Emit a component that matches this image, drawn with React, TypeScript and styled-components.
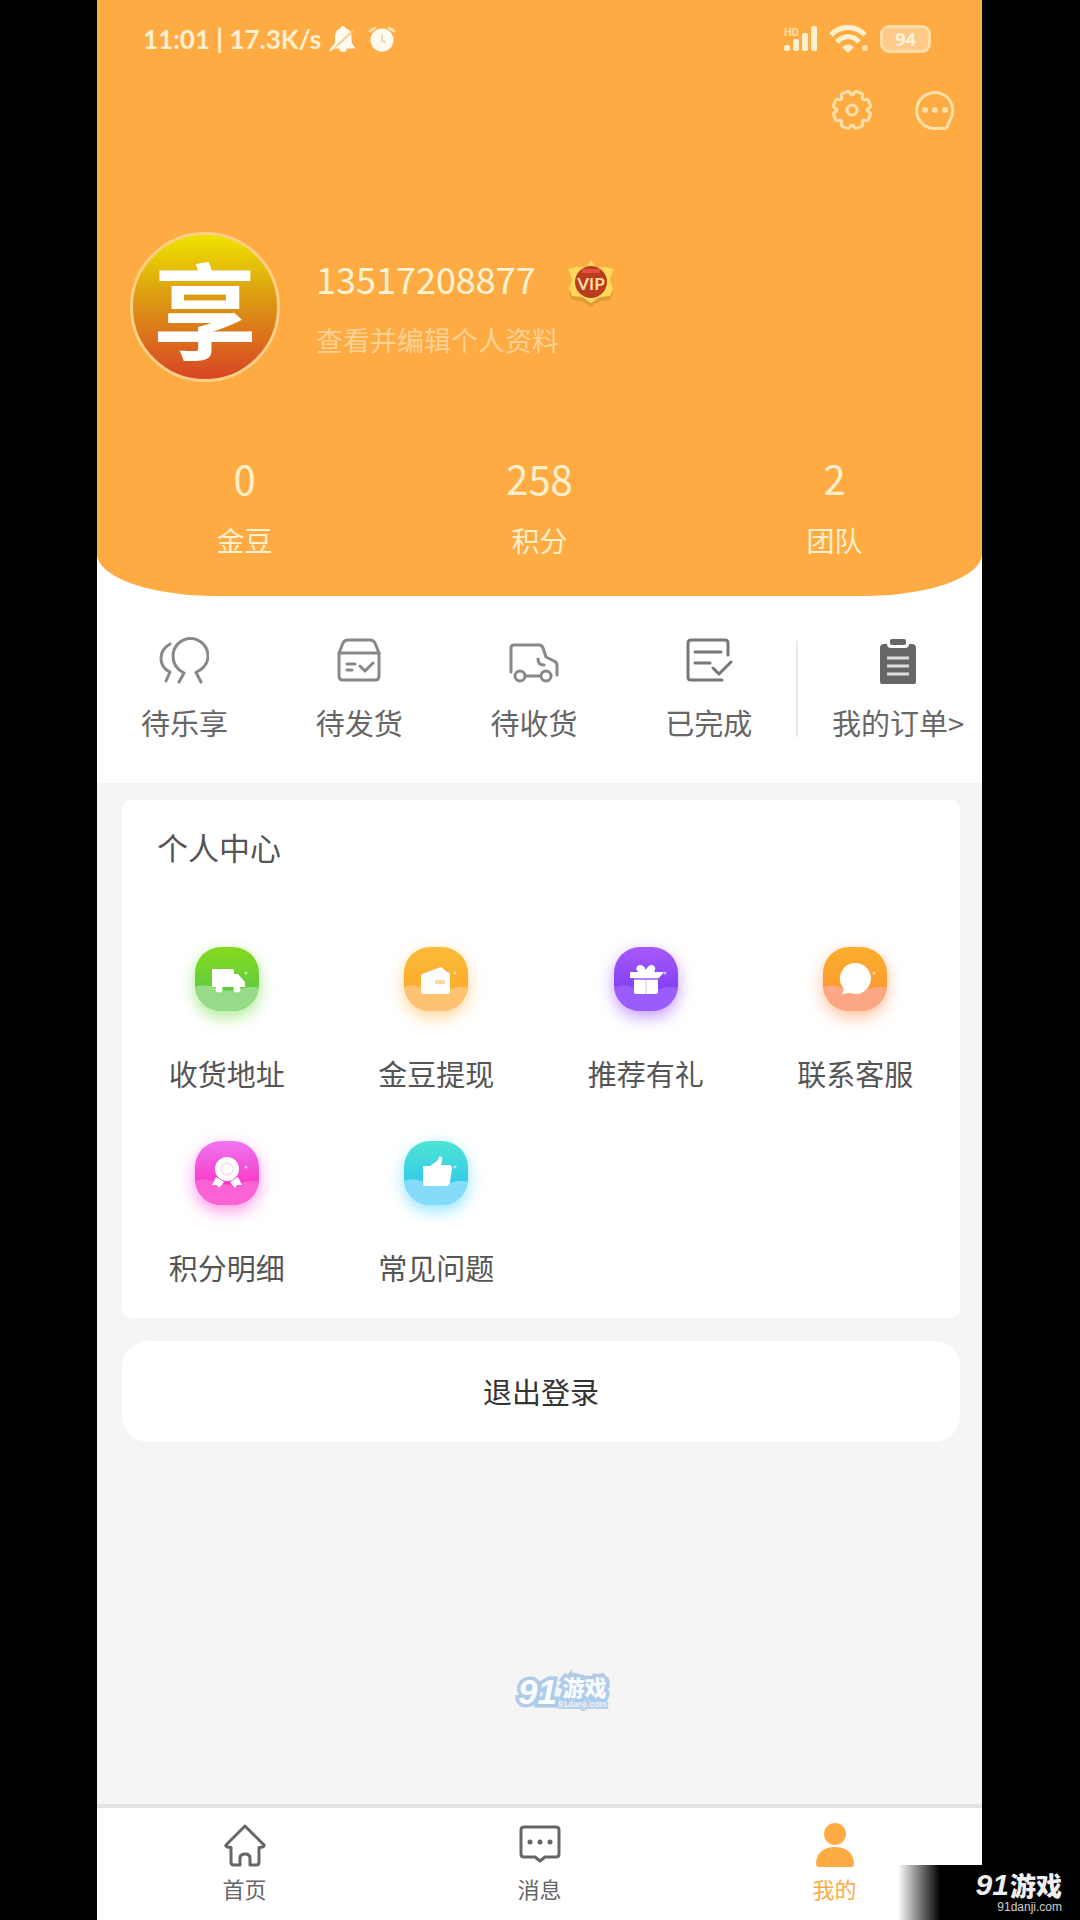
import React from "react";
import styled, { createGlobalStyle } from "styled-components";

const GlobalStyle = createGlobalStyle`
  * { box-sizing: border-box; }
  body {
    margin: 0;
    background: #000;
    font-family: "Noto Sans CJK SC", sans-serif;
  }
  button {
    border: 0;
    padding: 0;
    background: none;
    font: inherit;
    color: inherit;
    cursor: pointer;
  }
  a { color: inherit; text-decoration: none; }
  svg { display: block; flex: none; }
`;

const Page = styled.div`
  position: relative;
  display: flex;
  min-height: 100vh;
  padding: 0 98px 0 97px;
`;

const Screen = styled.div`
  flex: 1;
  min-width: 0;
  display: flex;
  flex-direction: column;
  background: #f5f5f5;
`;

const HeaderWrap = styled.div`
  background: #fff;
`;

const Header = styled.header`
  padding: 20px 0 38px;
  background: #ffab44;
  border-radius: 0 0 120px 120px / 0 0 42px 42px;
`;

const StatusBar = styled.div`
  display: flex;
  align-items: center;
  justify-content: space-between;
  height: 38px;
  padding: 0 51px 0 46px;
`;

const StatusGroup = styled.div<{ $gap: number }>`
  display: flex;
  align-items: center;
  gap: ${(p) => p.$gap}px;
  color: #fff0cf;
  font: 700 26px/38px Lato, sans-serif;
`;

const StatusIcons = styled.span`
  display: flex;
  align-items: center;
  gap: 11px;
`;

const Battery = styled.span`
  width: 51px;
  height: 28px;
  border: 3px solid #ffdda6;
  border-radius: 9px;
  background: #ffc98a;
  color: #fff3dc;
  font: 700 18px/22px "Open Sans", sans-serif;
  text-align: center;
`;

const Tools = styled.div`
  display: flex;
  justify-content: flex-end;
  gap: 43px;
  margin-top: 32px;
  padding-right: 27px;
  color: #ffe0a8;
`;

const Profile = styled.div`
  display: flex;
  align-items: center;
  gap: 36px;
  margin-top: 102px;
  padding-left: 33px;
`;

const Avatar = styled.div`
  width: 150px;
  height: 150px;
  border: 3px solid #ffcf85;
  border-radius: 50%;
  background: linear-gradient(#f0e000 2%, #dca011 40%, #dc7a1a 65%, #d84824 98%);
  color: #fff;
  font-size: 104px;
  font-weight: 700;
  line-height: 144px;
  text-align: center;
`;

const ProfileInfo = styled.div`
  display: flex;
  flex-direction: column;
  gap: 20px;
  padding-bottom: 3px;
`;

const NameRow = styled.div`
  display: flex;
  align-items: center;
  gap: 32px;
  height: 48px;
  color: #fff3d4;
  font-size: 36px;
  line-height: 48px;
`;

const BadgeBox = styled.span`
  padding-top: 12px;
`;

const EditLink = styled.a`
  && { color: #ffd294; }
  font-size: 27px;
  line-height: 36px;
`;

const Stats = styled.div`
  display: grid;
  grid-template-columns: repeat(3, 1fr);
  margin-top: 72px;
`;

const Stat = styled.button`
  && { color: #fff0cc; }
  display: flex;
  flex-direction: column;
  align-items: center;
  gap: 20px;
`;

const StatValue = styled.span`
  font-size: 40px;
  line-height: 48px;
`;

const StatLabel = styled.span`
  font-size: 28px;
  line-height: 36px;
`;

const Orders = styled.nav`
  display: grid;
  grid-template-columns: repeat(4, 175fr) 2px 184fr;
  align-items: center;
  padding: 40px 0 41px;
  background: #fff;
`;

const OrderItem = styled.a<{ $last?: boolean }>`
  display: flex;
  flex-direction: column;
  align-items: center;
  gap: 18px;
  min-width: 0;
  padding-left: ${(p) => (p.$last ? "16px" : "0")};
  && { color: #666; }
  font-size: 29px;
  line-height: 40px;
  white-space: nowrap;
`;

const Divider = styled.span`
  height: 96px;
  background: #eaeaea;
`;

const Main = styled.main`
  position: relative;
  flex: 1;
  padding: 17px 22px 0 25px;
`;

const Card = styled.section`
  padding: 25px 0 31px;
  border-radius: 9px;
  background: #fff;
`;

const CardTitle = styled.h2`
  margin: 0;
  padding-left: 35px;
  color: #555;
  font-size: 31px;
  font-weight: 400;
  line-height: 44px;
`;

const ServiceGrid = styled.div`
  display: grid;
  grid-template-columns: repeat(4, 1fr);
  row-gap: 48px;
  margin-top: 78px;
`;

const Service = styled.a`
  display: flex;
  flex-direction: column;
  align-items: center;
  gap: 42px;
  && { color: #555; }
  font-size: 29px;
  line-height: 40px;
`;

const Tile = styled.span<{ $top: string; $mid: string; $glow: string }>`
  width: 64px;
  height: 64px;
  border-radius: 26px;
  overflow: hidden;
  background: linear-gradient(${(p) => p.$top}, ${(p) => p.$mid} 65%);
  box-shadow: 0 6px 16px ${(p) => p.$glow};
`;

const Logout = styled.button`
  && {
    display: block;
    width: 100%;
    margin-top: 23px;
    padding: 30px 0;
    border-radius: 26px;
    background: #fff;
    color: #333;
    font-size: 29px;
    line-height: 41px;
  }
`;

const TabBar = styled.nav`
  display: grid;
  grid-template-columns: repeat(3, 1fr);
  padding: 15px 0 17px;
  border-top: 4px solid #e3e3e3;
  background: #fff;
`;

const Tab = styled.a<{ $active?: boolean }>`
  display: flex;
  flex-direction: column;
  align-items: center;
  gap: 6px;
  && { color: ${(p) => (p.$active ? "#ffab44" : "#666")}; }
  font-size: 22px;
  line-height: 30px;
`;

const CenterMark = styled.div`
  position: absolute;
  left: 421px;
  bottom: 94px;
  display: flex;
  gap: 1px;
  color: #fafcff;
  -webkit-text-stroke: 7px #aecbea;
  paint-order: stroke;
`;

const CornerMark = styled.div`
  position: absolute;
  right: 0;
  bottom: 0;
  width: 182px;
  height: 55px;
  padding: 6px 18px 0 0;
  color: #eee;
  background: linear-gradient(to right, #fff, #000 42px);
`;

const MarkRow = styled.span`
  display: flex;
  justify-content: flex-end;
  gap: 1px;
`;

const MarkNumber = styled.span<{ $size: number; $line: number }>`
  font: italic 700 ${(p) => p.$size}px/${(p) => p.$line}px "Liberation Sans", sans-serif;
`;

const MarkText = styled.span`
  display: flex;
  flex-direction: column;
  align-items: flex-end;
`;

const MarkName = styled.span<{ $size: number; $line: number }>`
  font-size: ${(p) => p.$size}px;
  font-weight: 900;
  line-height: ${(p) => p.$line}px;
`;

const MarkDomain = styled.span<{ $size: number; $line: number; $stroke: number }>`
  font: ${(p) => p.$size}px/${(p) => p.$line}px "Liberation Sans", sans-serif;
  -webkit-text-stroke-width: ${(p) => p.$stroke}px;
  opacity: 0.85;
`;

const line = (w: number) => ({
  fill: "none",
  stroke: "currentColor",
  strokeWidth: w,
  strokeLinecap: "round" as const,
  strokeLinejoin: "round" as const,
});

const BellOff = () => (
  <svg width="28" height="30" viewBox="0 0 28 30">
    <path d="M14 2c1.500 0 2.500 1 2.500 2.300 4 1.200 6 4 6 8.200v6l4 6H2l4-6v-6c0-4.200 2-7 5.500-8.200C11.500 3 12.500 2 14 2z" fill="#fffbee" />
    <path d="M10 24h8c-.5 3-2 4-4 4s-3.500-1-4-4z" fill="#fffbee" />
    <path d="M4 25L24 7" stroke="#f0cf98" strokeWidth="2" />
    <path d="M1 27L7 20" stroke="#fffbee" strokeWidth="2" />
  </svg>
);

const Alarm = () => (
  <svg width="28" height="28" viewBox="0 0 28 28">
    <circle cx="14" cy="15" r="11.500" fill="#fffbee" />
    <path d="M2 6l5-3M26 6l-5-3" stroke="#ffdda6" strokeWidth="3" strokeLinecap="round" />
    <path d="M14 10v6l4 1" fill="none" stroke="#e8d9b4" strokeWidth="2" />
  </svg>
);

const Signal = () => (
  <svg width="36" height="28" viewBox="0 0 36 28" fill="#fff0cf">
    <rect x="2" y="20" width="6" height="6" rx="2" />
    <rect x="11" y="14" width="6" height="12" rx="2" />
    <rect x="20" y="8" width="6" height="18" rx="2" />
    <rect x="29" y="1" width="6" height="25" rx="2" />
    <text x="2" y="11" fontFamily="Roboto, sans-serif" fontSize="11" fill="#ffdda6">HD</text>
  </svg>
);

const Wifi = () => (
  <svg width="40" height="30" viewBox="0 0 40 30">
    <path d="M2 11c9-10 25-10 34 0" fill="none" stroke="#fff0cf" strokeWidth="5" />
    <path d="M8 18c6-7 16-7 22 0" fill="none" stroke="#fff0cf" strokeWidth="5" />
    <path d="M13 23c4-3.500 8-3.500 12 0l-6 6z" fill="#fff0cf" />
    <circle cx="36" cy="24" r="3" fill="#ffdda6" />
  </svg>
);

const gearPoint = (radius: number, degrees: number) => {
  const a = (degrees * Math.PI) / 180;
  return `${(20 + radius * Math.cos(a)).toFixed(1)} ${(20 + radius * Math.sin(a)).toFixed(1)}`;
};

const gearPath =
  Array.from({ length: 8 }, (_, i) => {
    const mid = i * 45;
    return `${i ? "L" : "M"}${gearPoint(19, mid - 14)}Q${gearPoint(19, mid - 8)} ${gearPoint(16, mid - 5)}Q${gearPoint(14.5, mid)} ${gearPoint(16, mid + 5)}Q${gearPoint(19, mid + 8)} ${gearPoint(19, mid + 14)}`;
  }).join("") + "Z";

const Gear = () => (
  <svg width="40" height="40" viewBox="0 0 40 40" {...line(3)}>
    <path d={gearPath} />
    <circle cx="20" cy="20" r="5" />
  </svg>
);

const ChatRound = () => (
  <svg width="40" height="40" viewBox="0 0 40 40" {...line(3)}>
    <path d="M35 30A18 18 0 1 0 20 38.500h10q2 0 3-4z" />
    <g fill="currentColor" stroke="none">
      <circle cx="10" cy="20" r="3" />
      <circle cx="20" cy="20" r="3" />
      <circle cx="30" cy="20" r="3" />
    </g>
  </svg>
);

const VipBadge = () => (
  <svg width="46" height="48" viewBox="0 0 46 48">
    <path d="M23 3l5 7h9l9 0-4 13 3 10-3 7-10 1-9 6-9-6-10-1-3-7 3-10L0 10h18z" fill="#e09a38" />
    <path d="M23 0l5 7h8l10 2-4 11 3 9-3 7-10 1-9 6-9-6-10-1-3-7 3-9L0 9l10-2h8z" fill="#ffd95c" />
    <circle cx="23" cy="22" r="16" fill="#b93d1c" />
    <path d="M14 11h18" stroke="#e5503c" strokeWidth="4" />
    <text x="23" y="30" textAnchor="middle" fontFamily="Lato, sans-serif" fontWeight="700" fontSize="17" fill="#ffdca6">VIP</text>
  </svg>
);

const ShareIcon = () => (
  <svg width="50" height="48" viewBox="0 0 50 48" {...line(3)} stroke="#888">
    <path d="M20 46l5-9c-6-3-11-9-11-17a17.500 17.500 0 1 1 35 0c0 8-5 13-12 16.500l5 9.500" />
    <path d="M11 8C-1 15-1 30 11 36l-4 9" />
  </svg>
);

const BoxIcon = () => (
  <svg width="48" height="48" viewBox="0 0 48 48" {...line(3)} stroke="#888">
    <path d="M4 17l4-10q1.500-3 5-3h22q3.500 0 5 3l4 10v23q0 4-4 4H8q-4 0-4-4z" />
    <path d="M4 17h40M12 28h8M12 34h5M25 30l5 5 8-8" />
  </svg>
);

const TruckIcon = () => (
  <svg width="50" height="48" viewBox="0 0 50 48" {...line(3)} stroke="#888">
    <path d="M2 36V12q0-3 3-3h25q3 0 4 3l3 9 8 4q3 1 3 5v9" />
    <path d="M17 40h13M29 23q0 6 6 6" />
    <circle cx="11" cy="40" r="5" />
    <circle cx="37" cy="40" r="5" />
  </svg>
);

const DoneIcon = () => (
  <svg width="48" height="48" viewBox="0 0 48 48" {...line(3)} stroke="#777">
    <path d="M43 19V7q0-3-3-3H6Q3 4 3 7v34q0 3 3 3h31" />
    <path d="M10 16h26M10 27h15M28 32l6 6 12-12" />
  </svg>
);

const ClipboardIcon = () => (
  <svg width="48" height="48" viewBox="0 0 48 48">
    <path d="M6 12q0-4 4-4h3q0 4 4 4h14q4 0 4-4h3q4 0 4 4v33q0 4-4 4H10q-4 0-4-4z" fill="#666" />
    <rect x="16" y="3" width="16" height="6" rx="2" fill="#666" />
    <path d="M13 22h22M13 30h22M13 38h22" stroke="#ddd" strokeWidth="3" />
  </svg>
);

const HomeIcon = () => (
  <svg width="44" height="44" viewBox="0 0 44 44" {...line(3)}>
    <path d="M22 3L3 22q-1 2 5 2.500V39q0 3 3 3h6v-7q0-4 5-4t5 4v7h6q3 0 3-3V24.500q6-.5 5-2.500z" />
  </svg>
);

const MessageIcon = () => (
  <svg width="44" height="44" viewBox="0 0 44 44" {...line(3)}>
    <path d="M6 4h32q3 0 3 3v24q0 3-3 3H27l-5 4-5-4H6q-3 0-3-3V7q0-3 3-3z" />
    <g fill="currentColor" stroke="none">
      <circle cx="12" cy="19" r="2.500" />
      <circle cx="22" cy="19" r="2.500" />
      <circle cx="32" cy="19" r="2.500" />
    </g>
  </svg>
);

const UserIcon = () => (
  <svg width="44" height="44" viewBox="0 0 44 44" fill="currentColor">
    <circle cx="22" cy="11" r="11" />
    <path d="M3 41c0-11 8-17 19-17s19 6 19 17q0 3-3 3H6q-3 0-3-3z" />
  </svg>
);

const glyphs: Record<string, React.ReactNode> = {
  truck: (
    <>
      <path d="M17 22h20q2 0 2 2v3h4l7 8v5H17z" />
      <circle cx="24" cy="42" r="3.500" />
      <circle cx="42" cy="42" r="3.500" />
    </>
  ),
  wallet: (
    <>
      <path d="M18 27l19-7 6 5q3 0 3 3v16q0 3-3 3H20q-3 0-3-3V29z" />
      <path d="M31 35h10" stroke="#ffd5a0" strokeWidth="4" />
    </>
  ),
  gift: (
    <>
      <path d="M16 25h8l-2-3q1-4 4-4 4 0 6 5 2-5 6-5 4 1 3 5l-1 2h10l-5 6H16z" />
      <path d="M20 33h24v12q0 2-2 2H22q-2 0-2-2z" />
      <path d="M20 32h24M32 33v14" stroke="#d9c2ff" strokeWidth="1" />
    </>
  ),
  bubble: (
    <path d="M32 16a15.500 15.500 0 1 1-5 30l-8 1 2-5A15.500 15.500 0 0 1 32 16z" />
  ),
  medal: (
    <>
      <circle cx="32" cy="28" r="12" />
      <path d="M21 36l8 5-5 6-2-3-5 0zM43 36l-8 5 5 6 2-3 5 0z" />
      <circle cx="32" cy="28" r="6" fill="none" stroke="#ffe6e6" strokeWidth="2" />
    </>
  ),
  thumb: (
    <path d="M19 25h7l7-5 3-5q3 1 2 5l-1 4h8q3 0 3 3l-2 14q-1 4-4 4H21q-2 0-2-2z" />
  ),
};

const services = [
  { label: "收货地址", glyph: "truck", top: "#86da20", mid: "#62cc3c", wave: "#96dc88", glow: "rgba(120,220,80,.6)" },
  { label: "金豆提现", glyph: "wallet", top: "#fcbb3a", mid: "#fdac2c", wave: "#fdc372", glow: "rgba(255,185,80,.6)" },
  { label: "推荐有礼", glyph: "gift", top: "#a65af8", mid: "#8440f6", wave: "#9a5cfa", glow: "rgba(160,90,255,.6)" },
  { label: "联系客服", glyph: "bubble", top: "#fcae2c", mid: "#fb9c30", wave: "#fda684", glow: "rgba(255,150,90,.6)" },
  { label: "积分明细", glyph: "medal", top: "#ee76f0", mid: "#f83cc8", wave: "#fb62d4", glow: "rgba(255,80,215,.6)" },
  { label: "常见问题", glyph: "thumb", top: "#4ee4d4", mid: "#34cbe8", wave: "#84dbfa", glow: "rgba(80,215,250,.6)" },
];

const orders = [
  { label: "待乐享", Icon: ShareIcon },
  { label: "待发货", Icon: BoxIcon },
  { label: "待收货", Icon: TruckIcon },
  { label: "已完成", Icon: DoneIcon },
];

const stats = [
  { value: "0", label: "金豆" },
  { value: "258", label: "积分" },
  { value: "2", label: "团队" },
];

export default function App() {
  return (
    <Page>
      <GlobalStyle />
      <Screen>
        <HeaderWrap>
          <Header>
            <StatusBar>
              <StatusGroup $gap={8}>
                <span>11:01 | 17.3K/s</span>
                <StatusIcons>
                  <BellOff />
                  <Alarm />
                </StatusIcons>
              </StatusGroup>
              <StatusGroup $gap={11}>
                <Signal />
                <Wifi />
                <Battery>94</Battery>
              </StatusGroup>
            </StatusBar>
            <Tools>
              <button aria-label="设置"><Gear /></button>
              <button aria-label="消息"><ChatRound /></button>
            </Tools>
            <Profile>
              <Avatar>享</Avatar>
              <ProfileInfo>
                <NameRow>
                  <span>13517208877</span>
                  <BadgeBox><VipBadge /></BadgeBox>
                </NameRow>
                <EditLink href="#profile">查看并编辑个人资料</EditLink>
              </ProfileInfo>
            </Profile>
            <Stats>
              {stats.map((s) => (
                <Stat key={s.label}>
                  <StatValue>{s.value}</StatValue>
                  <StatLabel>{s.label}</StatLabel>
                </Stat>
              ))}
            </Stats>
          </Header>
        </HeaderWrap>

        <Orders>
          {orders.map(({ label, Icon }) => (
            <OrderItem key={label} href="#orders">
              <Icon />
              {label}
            </OrderItem>
          ))}
          <Divider />
          <OrderItem $last href="#all-orders">
            <ClipboardIcon />
            <span>我的订单&gt;</span>
          </OrderItem>
        </Orders>

        <Main>
          <Card>
            <CardTitle>个人中心</CardTitle>
            <ServiceGrid>
              {services.map((s) => (
                <Service key={s.label} href="#service">
                  <Tile $top={s.top} $mid={s.mid} $glow={s.glow}>
                    <svg width="64" height="64" viewBox="0 0 64 64" fill="#fff">
                      <path d="M0 40q10-4 20 1t26 1q10-4 18-1v24H0z" fill={s.wave} />
                      <circle cx="51" cy="26" r="1.500" opacity=".6" />
                      {glyphs[s.glyph]}
                    </svg>
                  </Tile>
                  {s.label}
                </Service>
              ))}
            </ServiceGrid>
          </Card>
          <Logout>退出登录</Logout>
          <CenterMark>
            <MarkNumber $size={35} $line={36}>91</MarkNumber>
            <MarkText>
              <MarkName $size={22} $line={25}>游戏</MarkName>
              <MarkDomain $size={9} $line={10} $stroke={4}>91danji.com</MarkDomain>
            </MarkText>
          </CenterMark>
        </Main>

        <TabBar>
          <Tab href="#home"><HomeIcon />首页</Tab>
          <Tab href="#messages"><MessageIcon />消息</Tab>
          <Tab $active href="#mine"><UserIcon />我的</Tab>
        </TabBar>
      </Screen>

      <CornerMark>
        <MarkText>
          <MarkRow>
            <MarkNumber $size={30} $line={28}>91</MarkNumber>
            <MarkName $size={26} $line={28}>游戏</MarkName>
          </MarkRow>
          <MarkDomain $size={12} $line={16} $stroke={0}>91danji.com</MarkDomain>
        </MarkText>
      </CornerMark>
    </Page>
  );
}
